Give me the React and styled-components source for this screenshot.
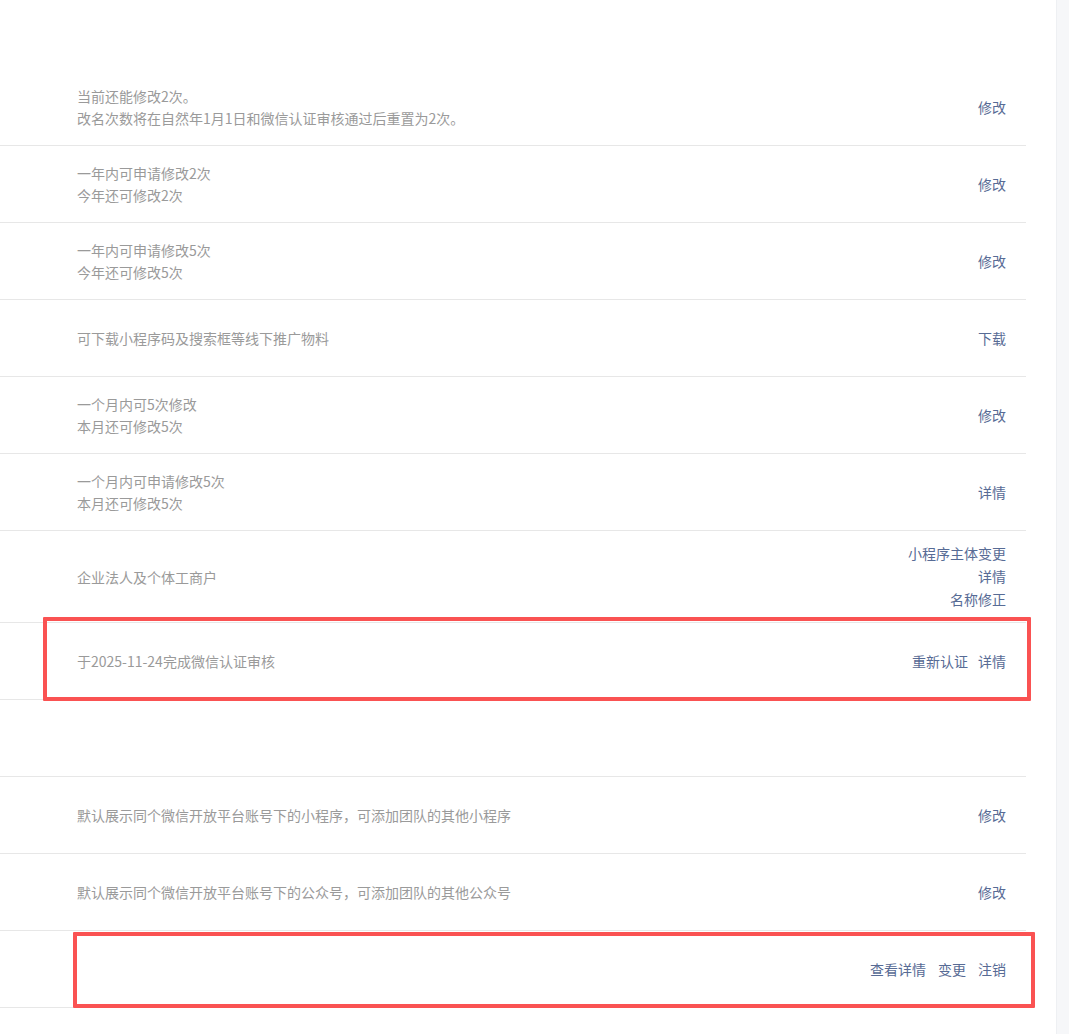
import React from "react";
import styled, { createGlobalStyle } from "styled-components";

const Global = createGlobalStyle`
  html, body { margin: 0; padding: 0; background: #fff; }
  body {
    font-family: "Noto Sans CJK SC", "Noto Sans", "Liberation Sans", sans-serif;
    font-size: 14px;
  }
`;

const Page = styled.div`
  display: flex;
  min-height: 1034px;
  width: 1069px;
  overflow: hidden;
`;

const Main = styled.div`
  position: relative;
  width: 1056px;
  flex: none;
  padding-top: 69px;
  box-sizing: border-box;
`;

const Strip = styled.div`
  flex: 1;
  background: #f6f7f9;
  border-left: 1px solid #eef0f3;
`;

const Table = styled.div`
  width: 1026px;
  display: flex;
  flex-direction: column;
`;

const Row = styled.div`
  display: flex;
  align-items: center;
  box-sizing: border-box;
  min-height: 77px;
  padding: 11px 20px 11px 77px;
  border-bottom: 1px solid #e7e7e7;
`;

const Desc = styled.div`
  flex: 1;
  color: #9a9a9a;
  font-size: 14px;
  line-height: 22px;
`;

const Line = styled.div``;

const Actions = styled.div`
  display: flex;
  flex-direction: ${(p) => (p.$stack ? "column" : "row")};
  align-items: flex-end;
  gap: ${(p) => (p.$stack ? "0" : `${p.$gap || 10}px`)};
  line-height: ${(p) => (p.$stack ? "23px" : "22px")};
`;

const Link = styled.a`
  color: #576b95;
  font-size: 14px;
  text-decoration: none;
  cursor: pointer;
  white-space: nowrap;
`;

const Mark = styled.div`
  position: absolute;
  box-sizing: border-box;
  border: 4px solid #fa5252;
  border-radius: 1px;
  pointer-events: none;
`;

const rows = [
  { lines: ["当前还能修改2次。", "改名次数将在自然年1月1日和微信认证审核通过后重置为2次。"], actions: ["修改"] },
  { lines: ["一年内可申请修改2次", "今年还可修改2次"], actions: ["修改"] },
  { lines: ["一年内可申请修改5次", "今年还可修改5次"], actions: ["修改"] },
  { lines: ["可下载小程序码及搜索框等线下推广物料"], actions: ["下载"] },
  { lines: ["一个月内可5次修改", "本月还可修改5次"], actions: ["修改"] },
  { lines: ["一个月内可申请修改5次", "本月还可修改5次"], actions: ["详情"] },
  { lines: ["企业法人及个体工商户"], actions: ["小程序主体变更", "详情", "名称修正"], stack: true },
  { lines: ["于2025-11-24完成微信认证审核"], actions: ["重新认证", "详情"], gap: 10 },
  { lines: [], actions: [] },
  { lines: ["默认展示同个微信开放平台账号下的小程序，可添加团队的其他小程序"], actions: ["修改"] },
  { lines: ["默认展示同个微信开放平台账号下的公众号，可添加团队的其他公众号"], actions: ["修改"] },
  { lines: [], actions: ["查看详情", "变更", "注销"], gap: 12 },
];

export default function App() {
  return (
    <>
      <Global />
      <Page>
        <Main>
          <Table>
            {rows.map((r, i) => (
              <Row key={i}>
                <Desc>
                  {r.lines.map((l, j) => (
                    <Line key={j}>{l}</Line>
                  ))}
                </Desc>
                <Actions $stack={r.stack} $gap={r.gap}>
                  {r.actions.map((a, j) => (
                    <Link key={j}>{a}</Link>
                  ))}
                </Actions>
              </Row>
            ))}
          </Table>
          <Mark style={{ left: 43, top: 617, width: 988, height: 84 }} />
          <Mark style={{ left: 73, top: 932, width: 962, height: 76 }} />
        </Main>
        <Strip />
      </Page>
    </>
  );
}
